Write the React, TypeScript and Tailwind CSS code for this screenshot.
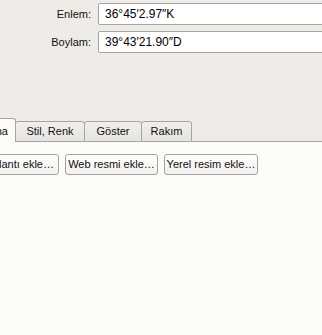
import React from 'react';

// Placemark properties panel: coordinate fields above, tab strip and
// action buttons below. The window is wider than the photographed crop,
// so the left and right edges are cut off on purpose.

const font = { fontFamily: '"Liberation Sans", Arial, sans-serif' };

const CoordRow: React.FC<{ label: string; value: string }> = ({ label, value }) => (
  <div className="flex items-center">
    <span className="w-[91px] shrink-0 text-right text-[11px] text-[#111]">{label}</span>
    <div className="ml-[7px] h-[22px] w-[300px] shrink-0 rounded-[2px] border border-[#a5a5a5] bg-white pl-[6px] flex items-center text-[12px] text-black">
      {value}
    </div>
  </div>
);

const tabs = ['Stil, Renk', 'Göster', 'Rakım'];
const tabWidths = ['w-[70px]', 'w-[58px]', 'w-[51px]'];

export default function App() {
  return (
    <div className="h-[335px] w-[322px] overflow-hidden bg-[#efece8] flex flex-col" style={font}>
      <div className="flex flex-col gap-[6px] pt-[3px]">
        <CoordRow label="Enlem:" value="36°45′2.97″K" />
        <CoordRow label="Boylam:" value="39°43′21.90″D" />
      </div>

      {/* tab strip */}
      <div className="mt-[65px] flex h-[24px] items-end -ml-[60px]">
        <div className="relative z-10 flex h-[24px] w-[76px] items-start justify-end rounded-t-[3px] border border-b-0 border-[#a6a5a1] bg-[#fcfbf8] pr-[7px] pt-[4px] text-[11px] text-[#111]">
          Açıklama
        </div>
        {tabs.map((t, i) => (
          <div
            key={t}
            className={`${tabWidths[i]} -ml-px flex h-[21px] items-center justify-center rounded-t-[3px] border border-[#a6a5a1] bg-gradient-to-b from-[#f1efec] to-[#e6e4e0] text-[11px] text-[#111]`}
          >
            {t}
          </div>
        ))}
        <div className="flex-1 border-b border-[#a6a5a1]" />
      </div>

      {/* tab page */}
      <div className="flex-1 bg-[#fcfbf8] pt-[12px]">
        <div className="flex gap-[6px] -ml-[45px]">
          {['Bağlantı ekle…', 'Web resmi ekle…', 'Yerel resim ekle…'].map((b, i) => (
            <button
              key={b}
              className={`${i === 0 ? 'w-[104px] justify-end pr-[4px]' : i === 1 ? 'w-[93px] justify-center' : 'w-[94px] justify-center'} h-[21px] shrink-0 rounded-[3px] border border-[#a3a3a3] bg-gradient-to-b from-[#ffffff] to-[#f2f0ec] text-[11px] text-[#111] flex items-center`}
            >
              {b}
            </button>
          ))}
        </div>
      </div>
    </div>
  );
}
